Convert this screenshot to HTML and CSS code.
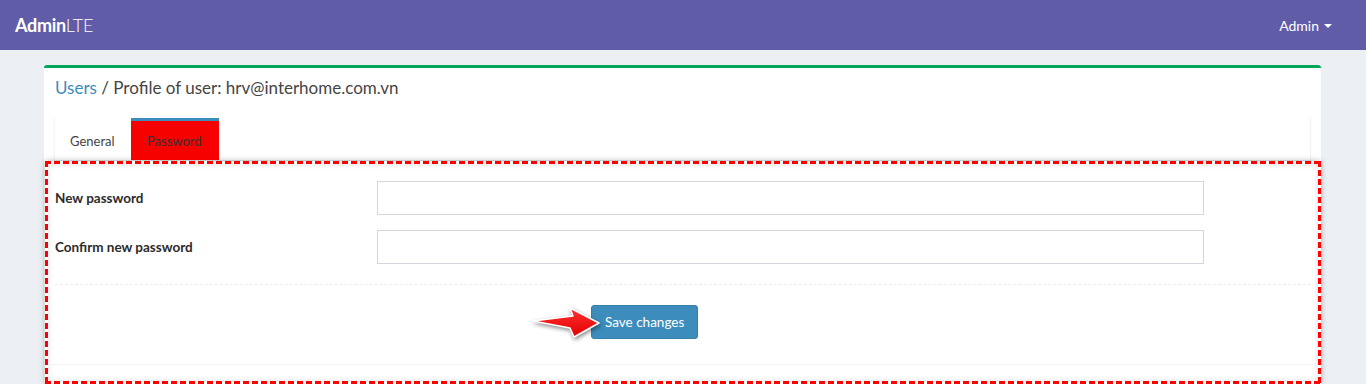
FILE: index.html
```html
<!DOCTYPE html>
<html lang="en">
<head>
    <meta charset="UTF-8">
    <meta name="viewport" content="width=device-width, initial-scale=1.0">
    <title>AdminLTE | Profile of user</title>
    <link rel="stylesheet" href="styles.css">
</head>
<body>
    <header class="main-header">
        <a class="logo" href="#"><b>Admin</b>LTE</a>
        <div class="user-menu">Admin <span class="caret"></span></div>
    </header>

    <section class="content">
        <div class="box">
            <div class="box-header">
                <h3 class="box-title"><a href="#">Users</a> / Profile of user: hrv@interhome.com.vn</h3>
            </div>
            <div class="box-body">
                <div class="nav-tabs-custom">
                    <ul class="nav-tabs">
                        <li class="tab-general"><a href="#">General</a></li>
                        <li class="tab-password active"><a href="#">Password</a></li>
                    </ul>
                </div>

                <div class="tab-content">
                    <form class="form-horizontal">
                        <div class="form-group">
                            <label for="new-password">New password</label>
                            <input type="password" id="new-password" class="form-control">
                        </div>
                        <div class="form-group">
                            <label for="confirm-password">Confirm new password</label>
                            <input type="password" id="confirm-password" class="form-control">
                        </div>
                        <div class="form-actions">
                            <div class="btn-wrap">
                                <svg class="arrow" width="70" height="32" viewBox="0 0 70 32">
                                    <defs>
                                        <linearGradient id="arrowFill" x1="0" y1="0" x2="0" y2="1">
                                            <stop offset="0" stop-color="#ff3030"/>
                                            <stop offset="1" stop-color="#e00000"/>
                                        </linearGradient>
                                    </defs>
                                    <polygon points="0,14 40,9 37,1 66,16 41,30 37,21" fill="url(#arrowFill)" stroke="#fff" stroke-width="1.5" stroke-linejoin="round"/>
                                </svg>
                                <button type="button" class="btn-primary">Save changes</button>
                            </div>
                        </div>
                    </form>
                    <div class="box-footer"></div>
                </div>
            </div>
        </div>
    </section>
</body>
</html>
```

FILE: styles.css
```css
body {
    margin: 0;
    background-color: #ecf0f5;
    font-family: 'Lato', 'Liberation Sans', sans-serif;
    color: #333;
    font-size: 14px;
}

a {
    text-decoration: none;
}

.main-header {
    height: 50px;
    background-color: #605ca8;
    display: flex;
    align-items: center;
    justify-content: space-between;
    padding: 0 34px 0 15px;
    color: white;
}

.logo {
    color: white;
    font-size: 18px;
    font-weight: 300;
    letter-spacing: -0.3px;
}

.logo b {
    font-weight: 700;
}

.user-menu {
    font-size: 14px;
    display: flex;
    align-items: center;
    gap: 5px;
}

.caret {
    width: 0;
    height: 0;
    border-top: 4px solid white;
    border-left: 4px solid transparent;
    border-right: 4px solid transparent;
    margin-top: 2px;
}

.content {
    padding: 15px 45px 0 44px;
}

.box {
    background-color: white;
    border-top: 3px solid #00a65a;
    border-radius: 3px;
    box-shadow: 0 1px 1px rgba(0, 0, 0, 0.1);
}

.box-header {
    padding: 10px 11px;
}

.box-title {
    margin: 0;
    font-size: 17px;
    font-weight: 400;
    line-height: 20px;
    color: #444;
}

.box-title a {
    color: #3c8dbc;
}

.box-body {
    padding: 10px;
}

.nav-tabs-custom {
    box-shadow: 0 1px 1px rgba(0, 0, 0, 0.1);
    border-left: 1px solid #f4f4f4;
    border-right: 1px solid #f4f4f4;
}

.nav-tabs {
    list-style: none;
    margin: 0;
    padding: 0;
    display: flex;
}

.nav-tabs li {
    border-top: 3px solid transparent;
}

.nav-tabs li a {
    display: block;
    box-sizing: border-box;
    padding: 1px 0 0 15px;
    height: 39px;
    line-height: 39px;
    font-size: 13px;
    color: #444;
}

.tab-general a {
    width: 76px;
}

.tab-password a {
    width: 88px;
}

.nav-tabs li.active {
    border-top-color: #3c8dbc;
    background-color: #f70000;
}

.nav-tabs li.active a {
    color: #333;
    padding-left: 16px;
}

.tab-content {
    margin: 1px -10px -10px -9px;
    padding: 17px 0 0;
    height: 223px;
    box-sizing: border-box;
    background-color: white;
    border: 3px solid transparent;
    background-image:
        repeating-linear-gradient(90deg, #f00 0 6px, transparent 6px 9px),
        repeating-linear-gradient(90deg, #f00 0 6px, transparent 6px 9px),
        repeating-linear-gradient(180deg, #f00 0 6px, transparent 6px 9px),
        repeating-linear-gradient(180deg, #f00 0 6px, transparent 6px 9px);
    background-size: 100% 3px, 100% 3px, 3px 100%, 3px 100%;
    background-position: 0 0, 0 100%, 0 0, 100% 0;
    background-origin: border-box;
    background-clip: border-box;
    background-repeat: no-repeat;
    box-shadow: 0 0 6px rgba(0, 0, 0, 0.28), inset 0 0 6px rgba(0, 0, 0, 0.12);
}

.form-horizontal {
    margin: 0 7px;
}

.form-group {
    display: grid;
    grid-template-columns: 322px 827px;
    align-items: center;
    margin-bottom: 15px;
}

.form-group label {
    font-weight: 700;
    font-size: 13.5px;
    color: #2b2b2b;
}

.form-control {
    height: 34px;
    box-sizing: border-box;
    border: 1px solid #d2d6de;
    padding: 6px 12px;
    font-size: 14px;
    margin: 0;
}

.form-actions {
    border-top: 1px dashed #eee;
    margin-top: 20px;
    padding: 20px 0 25px 0;
}

.btn-wrap {
    display: flex;
    align-items: center;
    margin-left: 478px;
}

.arrow {
    margin-right: -12px;
    margin-top: 2px;
    position: relative;
    z-index: 1;
    filter: drop-shadow(1px 2px 2px rgba(0, 0, 0, 0.45));
}

.btn-primary {
    background-color: #3c8dbc;
    border: 1px solid #367fa9;
    border-radius: 3px;
    color: white;
    font-family: inherit;
    font-size: 13.5px;
    padding: 0 13px;
    height: 34px;
}

.box-footer {
    border-top: 1px solid #f4f4f4;
}
```
